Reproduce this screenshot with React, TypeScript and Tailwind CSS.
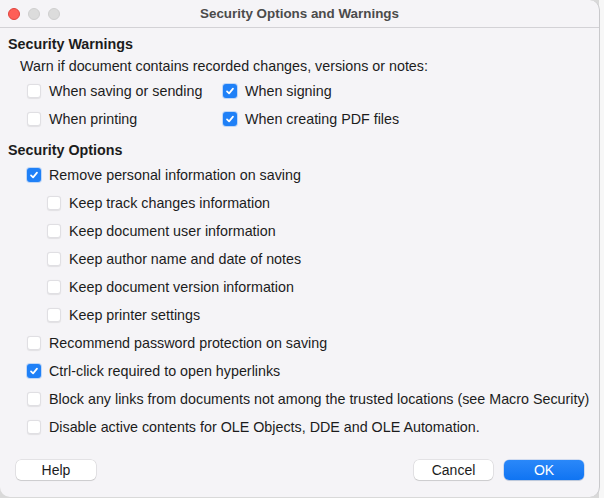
import React from 'react';

const FONT = { fontFamily: '"Liberation Sans", Arial, Helvetica, sans-serif' };

const Check = ({ checked }: { checked?: boolean }) =>
  checked ? (
    <div className="w-[14px] h-[14px] shrink-0 rounded-[3px] bg-[#1f80f7] flex items-center justify-center shadow-[0_0_0_1px_rgba(31,128,247,0.25)]">
      <svg width="10" height="10" viewBox="0 0 10 10" fill="none">
        <path d="M2 5.3 L4.1 7.4 L8 2.6" stroke="white" strokeWidth="1.7" strokeLinecap="round" strokeLinejoin="round" />
      </svg>
    </div>
  ) : (
    <div className="w-[14px] h-[14px] shrink-0 rounded-[3px] bg-white border border-[#e0dfe3] shadow-[0_0.5px_1px_rgba(0,0,0,0.08)]" />
  );

const Row = ({ label, checked, indent = 'pl-[19px]' }: { label: string; checked?: boolean; indent?: string }) => (
  <div className={`h-[28px] flex items-center gap-[8px] ${indent}`}>
    <Check checked={checked} />
    <span className="whitespace-nowrap">{label}</span>
  </div>
);

export default function App() {
  return (
    <div className="w-[604px] h-[498px] bg-[#d9d9d9] relative overflow-hidden text-[14.3px] leading-[18px] text-[#1c1c1c]" style={FONT}>
      <div className="absolute right-0 top-0 w-[5px] h-full bg-[#f7f7f7]" />
      <div className="relative w-[600px] h-[497px] bg-[#f5f4f7] rounded-tr-[10px] rounded-b-[10px] border-r border-[#c9c9cc] flex flex-col overflow-hidden">
        {/* title bar */}
        <div className="h-[28px] shrink-0 border-b border-[#d3d2d6] relative flex items-center justify-center">
          <div className="absolute left-[8px] top-[8px] flex gap-[8px]">
            <div className="w-[12px] h-[12px] rounded-full bg-[#fe5f57] border border-[#e0443e]" />
            <div className="w-[12px] h-[12px] rounded-full bg-[#dcdcdc] border border-[#cfcfcf]" />
            <div className="w-[12px] h-[12px] rounded-full bg-[#dcdcdc] border border-[#cfcfcf]" />
          </div>
          <span className="font-bold text-[13.4px] text-[#4b4b4b]">Security Options and Warnings</span>
        </div>

        <div className="flex flex-col pl-[8px] pt-[7px]">
          <div className="font-bold">Security Warnings</div>
          <div className="pl-[12px] mt-[4px]">Warn if document contains recorded changes, versions or notes:</div>
          <div className="grid grid-cols-[196px_1fr] pl-[19px] mt-[2px]">
            <Row label="When saving or sending" indent="" />
            <Row label="When signing" checked indent="" />
            <Row label="When printing" indent="" />
            <Row label="When creating PDF files" checked indent="" />
          </div>

          <div className="font-bold mt-[8px]">Security Options</div>
          <div className="flex flex-col mt-[2px]">
            <Row label="Remove personal information on saving" checked />
            <Row label="Keep track changes information" indent="pl-[39px]" />
            <Row label="Keep document user information" indent="pl-[39px]" />
            <Row label="Keep author name and date of notes" indent="pl-[39px]" />
            <Row label="Keep document version information" indent="pl-[39px]" />
            <Row label="Keep printer settings" indent="pl-[39px]" />
            <Row label="Recommend password protection on saving" />
            <Row label="Ctrl-click required to open hyperlinks" checked />
            <Row label="Block any links from documents not among the trusted locations (see Macro Security)" />
            <Row label="Disable active contents for OLE Objects, DDE and OLE Automation." />
          </div>
        </div>

        <div className="flex items-center px-[16px] pr-[15px] mt-[19px]">
          <button className="w-[80px] h-[20px] rounded-[5px] bg-white text-[14px] leading-none text-[#1c1c1c] shadow-[0_0_0_0.5px_rgba(0,0,0,0.14),0_1px_1px_rgba(0,0,0,0.1)]">
            Help
          </button>
          <div className="flex-1" />
          <button className="w-[79px] h-[20px] rounded-[5px] bg-white text-[14px] leading-none text-[#1c1c1c] shadow-[0_0_0_0.5px_rgba(0,0,0,0.14),0_1px_1px_rgba(0,0,0,0.1)]">
            Cancel
          </button>
          <button className="ml-[11px] w-[80px] h-[20px] rounded-[5px] bg-gradient-to-b from-[#2a88f9] to-[#0f74f2] text-[14px] leading-none text-white shadow-[0_0_0_0.5px_rgba(0,80,200,0.3),0_1px_1px_rgba(0,0,0,0.1)]">
            OK
          </button>
        </div>
      </div>
    </div>
  );
}
